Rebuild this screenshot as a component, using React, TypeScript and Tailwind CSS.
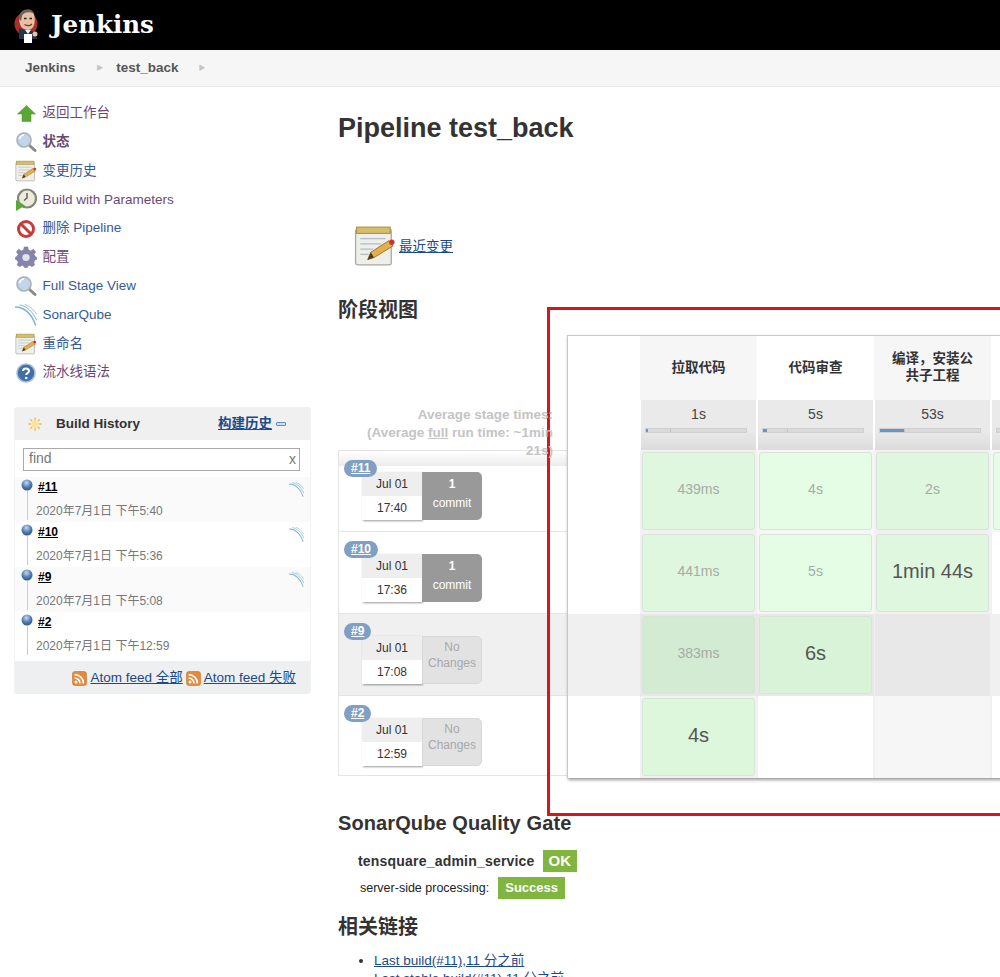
import React from "react";

const blue = "text-[#204a87]";
const purple = "text-[#5c3566]";

const ArrowUp = () => (
  <svg width="19" height="17" viewBox="0 0 19 17">
    <path d="M9.5 0.5 L18.5 9 H14 V16.5 H5 V9 H0.5 Z" fill="#5aa832" stroke="#4a8f2a" strokeWidth="0.5" />
  </svg>
);

const Magnifier = () => (
  <svg width="22" height="22" viewBox="0 0 22 22">
    <path d="M13.5 13.5 L20 19.5" stroke="#8a8a8a" strokeWidth="3" strokeLinecap="round" />
    <circle cx="9" cy="9" r="7" fill="#c3d5ea" stroke="#a6aeb8" strokeWidth="1.6" />
    <path d="M4.5 8 A5 5 0 0 1 9 4" stroke="#fff" strokeWidth="1.5" fill="none" />
  </svg>
);

const Notepad = ({ size = 22 }: { size?: number }) => (
  <svg width={size} height={size} viewBox="0 0 40 40">
    <rect x="1.5" y="4" width="34" height="34" rx="2" fill="#eeeeea" stroke="#a8a8a0" strokeWidth="1.2" />
    <rect x="2.5" y="2" width="32" height="6" fill="#d6bd6a" stroke="#a69043" strokeWidth="1" />
    <path d="M6 13 H30 M6 18 H26 M6 23 H18 M6 28 H14" stroke="#b5bcc4" strokeWidth="1.2" />
    <path d="M13 33 L16 26 L33 15 L37 20 L19 31 Z" fill="#e5b04a" stroke="#8c6a24" strokeWidth="0.8" />
    <path d="M13 33 L16 26 L19 31 Z" fill="#4b3a20" />
    <circle cx="36" cy="16.5" r="2.6" fill="#cc3333" />
  </svg>
);

const BuildParams = () => (
  <svg width="22" height="24" viewBox="0 0 22 24">
    <circle cx="12" cy="10.5" r="9" fill="#eceadd" stroke="#85857c" strokeWidth="2.2" />
    <path d="M12 5 V10 L9 12.5" stroke="#555" strokeWidth="1.4" fill="none" />
    <path d="M1 12 L10 17.5 L1 23 Z" fill="#58a83a" />
  </svg>
);

const NoEntry = () => (
  <svg width="20" height="20" viewBox="0 0 20 20">
    <circle cx="10" cy="10" r="7.5" fill="#fff" stroke="#c93a3a" strokeWidth="3" />
    <path d="M5 5 L15 15" stroke="#c93a3a" strokeWidth="3" />
  </svg>
);

const Gear = () => (
  <svg width="22" height="22" viewBox="0 0 22 22">
    <path d="M9.2 1 H12.8 L13.4 4 L15.8 5 L18.4 3.3 L20.7 5.9 L19 8.3 L20 10.6 L21.6 11.2 V13.4 L19.8 14 L18.8 16.4 L19.6 18.9 L17 20.7 L14.8 19.2 L12.8 20 L12.4 21.6 H9.4 L9 20 L6.9 19.2 L4.8 20.7 L2.2 18.9 L3.2 16.4 L2.1 14 L0.4 13.4 V11.2 L2 10.6 L3.2 8.3 L1.4 5.9 L3.8 3.3 L6.2 5 L8.6 4 Z" fill="#8684ab" stroke="#6f6d92" strokeWidth="0.5" />
    <circle cx="11" cy="11.5" r="3.6" fill="#e4e4ee" />
  </svg>
);

const Sonar = ({ size = 22 }: { size?: number }) => (
  <svg width={size} height={size} viewBox="0 0 22 22" fill="none" stroke="#7fb6cf" strokeLinecap="round">
    <path d="M0.5 3 C9 3 17 10 20.5 21" strokeWidth="1.5" />
    <path d="M5 1 C12 2 18 8 21.5 16" strokeWidth="1" />
    <path d="M10 0.5 C15 2 19 6 21.5 10" strokeWidth="0.8" />
  </svg>
);

const Help = () => (
  <svg width="20" height="20" viewBox="0 0 20 20">
    <circle cx="10" cy="10" r="9" fill="#3f70a8" stroke="#a8bcd2" strokeWidth="1.6" />
    <path d="M7 8 C7 4.5 13 4.5 13 8 C13 10 10.2 10 10.2 12" stroke="#fff" strokeWidth="2" fill="none" />
    <circle cx="10.2" cy="15" r="1.3" fill="#fff" />
  </svg>
);

const Sun = () => (
  <svg width="14" height="14" viewBox="0 0 16 16">
    <circle cx="8" cy="8" r="4" fill="#fbe39a" />
    <g stroke="#eeb63f" strokeWidth="1.5" strokeLinecap="round">
      <path d="M8 1 V3 M8 13 V15 M1 8 H3 M13 8 H15 M3 3 L4.4 4.4 M11.6 11.6 L13 13 M13 3 L11.6 4.4 M3 13 L4.4 11.6" />
    </g>
  </svg>
);

const Ball = () => (
  <svg width="12" height="12" viewBox="0 0 12 12">
    <defs>
      <radialGradient id="ball" cx="0.45" cy="0.3" r="0.75">
        <stop offset="0" stopColor="#c9d9ec" />
        <stop offset="0.55" stopColor="#4f7db4" />
        <stop offset="1" stopColor="#2c4f80" />
      </radialGradient>
    </defs>
    <circle cx="6" cy="6" r="5.5" fill="url(#ball)" />
  </svg>
);

const Rss = () => (
  <svg width="15" height="15" viewBox="0 0 15 15" className="mt-[2px] shrink-0">
    <rect x="0.5" y="0.5" width="14" height="14" rx="2.5" fill="#e58a3c" stroke="#c87227" strokeWidth="0.6" />
    <circle cx="4" cy="11" r="1.5" fill="#fff" />
    <path d="M2.6 7 A5.4 5.4 0 0 1 8 12.4 M2.6 3.6 A8.8 8.8 0 0 1 11.4 12.4" stroke="#fff" strokeWidth="1.6" fill="none" />
  </svg>
);

// butler head over the red disc
const Logo = () => (
  <svg width="27" height="36" viewBox="0 0 27 36">
    <circle cx="12" cy="17" r="11.5" fill="#a8302a" />
    <path d="M5 11 C5 3 19 0 20.5 9 C21.5 17 19.5 23 13.5 23 C8 23 5 18 5 11 Z" fill="#e6bfa5" />
    <path d="M5 12 C3.5 3 17 -2 20.5 7 C16 4 10 5 8 8.5 C8 10 7.5 11 7 14 Z" fill="#6b6258" />
    <path d="M10 11.5 h2.5 M15.5 11.5 h2.5" stroke="#222" strokeWidth="1.3" />
    <path d="M10.5 17.5 C13 19 16 19 18 17" stroke="#7a3026" strokeWidth="1.2" fill="none" />
    <path d="M5 21 C7 22 10 23 13 23 C18 23 22 25 23 32 H5 Z" fill="#23364d" />
    <path d="M11 23 L14 27 L17 23 Z" fill="#f2f2f2" />
    <rect x="10" y="27" width="8" height="9" fill="#fff" />
    <circle cx="21" cy="27" r="2.5" fill="#e6bfa5" />
  </svg>
);

const navItems = [
  { icon: <ArrowUp />, label: "返回工作台", color: purple },
  { icon: <Magnifier />, label: "状态", color: purple, bold: true },
  { icon: <Notepad />, label: "变更历史", color: blue },
  { icon: <BuildParams />, label: "Build with Parameters", color: purple },
  { icon: <NoEntry />, label: "删除 Pipeline", color: blue },
  { icon: <Gear />, label: "配置", color: purple },
  { icon: <Magnifier />, label: "Full Stage View", color: blue },
  { icon: <Sonar />, label: "SonarQube", color: blue },
  { icon: <Notepad />, label: "重命名", color: blue },
  { icon: <Help />, label: "流水线语法", color: purple },
];

const history = [
  { id: "#11", time: "2020年7月1日 下午5:40", sonar: true, alt: true },
  { id: "#10", time: "2020年7月1日 下午5:36", sonar: true, alt: false },
  { id: "#9", time: "2020年7月1日 下午5:08", sonar: true, alt: true },
  { id: "#2", time: "2020年7月1日 下午12:59", sonar: false, alt: false },
];

const Sidebar = () => (
  <div className="w-[338px] shrink-0 pl-[14px] pr-[27px] pt-[12px]">
    <ul>
      {navItems.map((item) => (
        <li key={item.label} className="flex h-[28.8px] items-center">
          <span className="flex w-[28.5px] shrink-0 items-center justify-center pr-[4px]">{item.icon}</span>
          <span className={`text-[13.5px] opacity-90 ${item.color} ${item.bold ? "font-bold" : ""}`}>{item.label}</span>
        </li>
      ))}
    </ul>
    <div className="mt-[20px] w-[297px] overflow-hidden rounded-[3px] border-x border-[#f2f2f2]">
      <div className="flex h-[33px] items-center bg-[#f0f0f0] pl-[13px] pr-[24px] pt-[1px]">
        <Sun />
        <span className="ml-[14px] text-[13.5px] font-bold text-[#333]">Build History</span>
        <a className={`ml-auto text-[13.5px] font-bold underline ${blue}`}>构建历史</a>
        <span className="ml-[4px] h-[4px] w-[10px] rounded-[1px] border border-[#5b8ec4] bg-[#cfe0f0]" />
      </div>
      <div className="pb-[6px] pl-[8px] pr-[10px] pt-[8px]">
        <div className="flex h-[23px] items-center justify-between border border-[#aaa] pl-[5px] pr-[3px] text-[14px] leading-[18px] text-[#777]">
          <span className="-mt-[2px]">find</span>
          <span>x</span>
        </div>
      </div>
      <div>
        {history.map((row) => (
          <div key={row.id} className={`relative h-[45px] pl-[23px] ${row.alt ? "bg-[#fafafa]" : "bg-white"}`}>
            <span className="absolute left-[6px] top-[2px] leading-none">
              <Ball />
            </span>
            <span className="absolute bottom-[2px] left-[12px] top-[14px] w-px bg-[#c5ccd4]" />
            <div className="flex items-start justify-between pr-[6px]">
              <a className="mt-[2px] text-[12px] font-bold leading-[16px] text-black underline">{row.id}</a>
              {row.sonar && (
                <span className="mt-[5px]">
                  <Sonar size={15} />
                </span>
              )}
            </div>
            <div className="absolute left-[21px] top-[26px] text-[12px] leading-[16px] text-[#777]">{row.time}</div>
          </div>
        ))}
      </div>
      <div className="mt-[4px] flex h-[33px] items-center justify-end gap-[3px] bg-[#eeeff0] pr-[14px] pt-[1px] text-[13.5px]">
        <Rss />
        <a className={`underline ${blue}`}>Atom feed 全部</a>
        <Rss />
        <a className={`underline ${blue}`}>Atom feed 失败</a>
      </div>
    </div>
  </div>
);

const builds = [
  { id: "#11", date: "Jul 01", time: "17:40", commits: true, band: false },
  { id: "#10", date: "Jul 01", time: "17:36", commits: true, band: false },
  { id: "#9", date: "Jul 01", time: "17:08", commits: false, band: true },
  { id: "#2", date: "Jul 01", time: "12:59", commits: false, band: false },
];

const BuildRow = ({ b, first, last }: { b: (typeof builds)[number]; first: boolean; last: boolean }) => (
  <div className={`relative border-b border-l border-[#e4e4e4] ${last ? "h-[80px]" : "h-[82px]"} ${first ? "border-t" : ""} ${b.band ? "bg-[#f0f0f0]" : "bg-white"}`}>
    {first && <div className="absolute inset-x-0 top-0 h-[15px] bg-gradient-to-b from-white to-[#ececec]" />}
    <span className="absolute left-[5px] top-[9px] z-10 rounded-full bg-[#7f9fc3] px-[7px] text-[12px] font-bold leading-[17px] text-white underline">
      {b.id}
    </span>
    <div className={`relative flex pl-[23px] ${first ? "pt-[21px]" : "pt-[22px]"}`}>
      <div className="h-[48px] w-[60px] bg-white text-center text-[12px] text-[#333] shadow-[1px_1px_2px_rgba(0,0,0,0.4)]">
        <div className="h-[24px] bg-[#eeeeee] leading-[24px]">{b.date}</div>
        <div className="leading-[24px]">{b.time}</div>
      </div>
      {b.commits ? (
        <div className="h-[48px] w-[60px] rounded-r-[5px] bg-[#999999] pt-[3px] text-center text-[12px] leading-[19px] text-white">
          <div className="font-bold">1</div>
          <div>commit</div>
        </div>
      ) : (
        <div className="h-[48px] w-[60px] rounded-r-[5px] border border-[#d8d8d8] bg-[#e2e2e2] pt-[2px] text-center text-[12px] leading-[16px] text-[#a8a8a8]">
          <div>No</div>
          <div>Changes</div>
        </div>
      )}
    </div>
  </div>
);

const stageCols = [
  { name: "拉取代码", avg: "1s", bar: 2, tone: "bg-[#f6f6f6]" },
  { name: "代码审查", avg: "5s", bar: 4, tone: "bg-white" },
  { name: "编译，安装公共子工程", avg: "53s", bar: 24, tone: "bg-[#f6f6f6]" },
  { name: "", avg: "", bar: 0, tone: "bg-white" },
];

const cells = [
  [
    { t: "439ms", big: false, bg: "bg-[#dff7df]" },
    { t: "4s", big: false, bg: "bg-[#e5fde5]" },
    { t: "2s", big: false, bg: "bg-[#dff7df]" },
    { t: "", big: false, bg: "bg-[#e5fde5]" },
  ],
  [
    { t: "441ms", big: false, bg: "bg-[#dff7df]" },
    { t: "5s", big: false, bg: "bg-[#e5fde5]" },
    { t: "1min 44s", big: true, bg: "bg-[#dff7df]" },
    null,
  ],
  [
    { t: "383ms", big: false, bg: "bg-[#d3ebd3]" },
    { t: "6s", big: true, bg: "bg-[#d9f3d9]" },
    null,
    null,
  ],
  [{ t: "4s", big: true, bg: "bg-[#ddf7dd]" }, null, null, null],
];

const emptyBg = [
  ["", "", "", ""],
  ["", "", "", "bg-white"],
  ["", "", "bg-[#e8e8e8]", "bg-[#f0f0f0]"],
  ["", "bg-white", "bg-[#f6f6f6]", "bg-white"],
];

const StageTable = () => (
  <div className="absolute left-[567px] top-[335px] w-[480px] border-l border-t border-[#c8c8c8] bg-white shadow-[1px_2px_3px_rgba(0,0,0,0.4)]">
    <div className="grid grid-cols-[72px_117px_117px_117px_117px]">
      <div className="h-[64px]" />
      {stageCols.map((c, i) => (
        <div key={i} className={`flex h-[64px] items-center justify-center px-[14px] pb-[2px] text-center text-[13.5px] font-bold leading-[17px] text-[#333] ${c.tone}`}>
          {c.name}
        </div>
      ))}
      <div className="h-[50px]" />
      {stageCols.map((c, i) => (
        <div key={i} className="h-[50px] border-x border-white bg-gradient-to-b from-[#eaeaea] from-60% to-[#dcdcdc] pl-[4px] pr-[9px] pt-[5px] text-center text-[14px] leading-[18px] text-[#444]">
          <div className="h-[23px] pl-[5px]">{c.avg}</div>
          <div className="relative h-[5px] border border-[#cfcfcf] bg-[#dadada]">
            <div className="absolute inset-y-0 left-0 w-1/4 border-r border-[#c4c4c4]" />
            <div className="absolute inset-y-0 left-0 bg-[#6a94c8]" style={{ width: `${c.bar}%` }} />
          </div>
        </div>
      ))}
      {cells.map((row, r) => (
        <React.Fragment key={r}>
          <div className={`h-[82px] ${r === 2 ? "bg-[#f0f0f0]" : "bg-white"}`} />
          {row.map((cell, i) =>
            cell ? (
              <div key={i} className={`h-[82px] p-[2px] ${r === 2 ? "bg-[#e8e8e8]" : i % 2 === 0 ? "bg-[#f1f1f1]" : "bg-[#f6f6f6]"}`}>
                <div
                  className={`flex h-[78px] items-center justify-center rounded-[3px] border border-[#d8e4d8] pb-[4px] ${cell.bg} ${
                    cell.big ? "text-[20px] text-[#555]" : "text-[14px] text-[#a4aca4]"
                  }`}
                >
                  {cell.t}
                </div>
              </div>
            ) : (
              <div key={i} className={`h-[82px] border-x border-[#f0f0f0] ${emptyBg[r][i]}`} />
            ),
          )}
        </React.Fragment>
      ))}
    </div>
  </div>
);

const Main = () => (
  <div className="min-w-0 flex-1 text-[#333]">
    <h1 className="mt-[23px] text-[27px] font-bold leading-[36px]">Pipeline test_back</h1>
    <div className="ml-[16px] mt-[79px] flex items-center">
      <Notepad size={42} />
      <a className={`ml-[3px] mt-[2px] text-[13.5px] underline ${blue}`}>最近变更</a>
    </div>
    <h2 className="mt-[29px] text-[20px] font-bold leading-[28px]">阶段视图</h2>
    <div className="relative z-10 h-[126px]">
      <div className="ml-[15px] w-[200px] pt-[82px] text-right text-[13.5px] font-bold leading-[18px] text-[#c4c4c4]">
        Average stage times:
        <br />
        (Average <span className="underline">full</span> run time: ~1min 21s)
      </div>
    </div>
    <div className="w-[240px]">
      {builds.map((b, i) => (
        <BuildRow key={b.id} b={b} first={i === 0} last={i === builds.length - 1} />
      ))}
    </div>
    <h2 className="mt-[33px] text-[20px] font-bold leading-[28px] tracking-[0.1px]">SonarQube Quality Gate</h2>
    <div className="ml-[20px] mt-[13px] flex items-center">
      <span className="text-[14px] font-bold tracking-[0.2px]">tensquare_admin_service</span>
      <span className="ml-[8px] bg-[#80b53f] px-[6px] text-[15px] font-bold leading-[22px] text-white">OK</span>
    </div>
    <div className="ml-[22px] mt-[5px] flex items-center">
      <span className="text-[12.5px] text-[#222]">server-side processing:</span>
      <span className="ml-[9px] bg-[#80b53f] px-[7px] text-[13px] font-bold leading-[22px] text-white">Success</span>
    </div>
    <h2 className="mt-[14px] text-[20px] font-bold leading-[28px]">相关链接</h2>
    <ul className="ml-[36px] mt-[11px] list-disc text-[13.5px] leading-[18px]">
      <li>
        <a className={`underline ${blue}`}>Last build(#11),11 分之前</a>
      </li>
      <li>
        <a className={`underline ${blue}`}>Last stable build(#11),11 分之前</a>
      </li>
    </ul>
  </div>
);

export default function App() {
  return (
    <div className="relative h-[977px] w-[1000px] overflow-hidden bg-white font-['Liberation_Sans','Noto_Sans_CJK_SC',sans-serif]">
      <header className="flex h-[50px] items-center bg-black pl-[14px]">
        <Logo />
        <span className="ml-[10px] font-['DejaVu_Serif',serif] text-[24.5px] font-bold text-white">Jenkins</span>
      </header>
      <nav className="flex h-[37px] items-center border-b border-[#e8e8e8] bg-[#f6f6f6] pl-[25px] text-[13.5px] font-bold text-[#555]">
        <span>Jenkins</span>
        <span className="ml-[21px] text-[7px] text-[#c4c4c4]">▶</span>
        <span className="ml-[13px]">test_back</span>
        <span className="ml-[20px] text-[7px] text-[#c4c4c4]">▶</span>
      </nav>
      <div className="flex">
        <Sidebar />
        <Main />
      </div>
      <StageTable />
      <div className="absolute left-[547px] top-[307px] h-[509px] w-[470px] border-[3px] border-[#d8141c]" />
    </div>
  );
}
